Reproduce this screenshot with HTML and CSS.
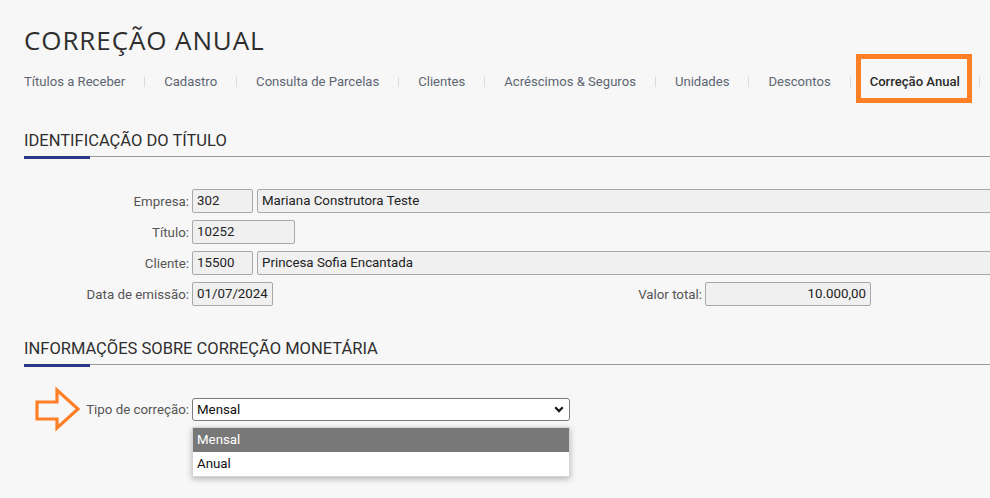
FILE: index.html
```html
<!DOCTYPE html>
<html lang="pt-BR">
<head>
<meta charset="utf-8">
<title>Correção Anual</title>
<link rel="stylesheet" href="styles.css">
</head>
<body>
<div class="page">
  <h1 class="page-title">CORREÇÃO ANUAL</h1>
  <nav class="tabs">
    <a class="tab">Títulos a Receber</a>
    <a class="tab">Cadastro</a>
    <a class="tab">Consulta de Parcelas</a>
    <a class="tab">Clientes</a>
    <a class="tab">Acréscimos &amp; Seguros</a>
    <a class="tab">Unidades</a>
    <a class="tab">Descontos</a>
    <a class="tab active">Correção Anual</a>
  </nav>

  <section class="section sec-id">
    <h2 class="section-title">IDENTIFICAÇÃO DO TÍTULO</h2>
    <div class="form">
      <div class="row">
        <span class="lbl">Empresa:</span>
        <div class="field w-code">302</div>
        <div class="field w-name">Mariana Construtora Teste</div>
      </div>
      <div class="row">
        <span class="lbl">Título:</span>
        <div class="field w-title">10252</div>
      </div>
      <div class="row">
        <span class="lbl">Cliente:</span>
        <div class="field w-code">15500</div>
        <div class="field w-name">Princesa Sofia Encantada</div>
      </div>
      <div class="row">
        <span class="lbl">Data de emissão:</span>
        <div class="field w-date">01/07/2024</div>
        <span class="lbl lbl-valor">Valor total:</span>
        <div class="field w-valor">10.000,00</div>
      </div>
    </div>
  </section>

  <section class="section sec-corr">
    <h2 class="section-title">INFORMAÇÕES SOBRE CORREÇÃO MONETÁRIA</h2>
    <div class="form">
      <div class="row row-select">
        <svg class="hint-arrow" width="48" height="48" viewBox="0 0 48 48" aria-hidden="true">
          <path d="M3 16 H23 V4 L44 23 L23 42 V33 H3 Z" fill="none" stroke="#ff7f27" stroke-width="3.2" stroke-linejoin="miter"/>
        </svg>
        <span class="lbl">Tipo de correção:</span>
        <div class="select-wrap">
          <div class="select">
            <span>Mensal</span>
            <svg class="chev" width="10" height="7" viewBox="0 0 10 7" aria-hidden="true">
              <path d="M1.2 1.3 L5 5.1 L8.8 1.3" fill="none" stroke="#1a1a1a" stroke-width="2.2"/>
            </svg>
          </div>
          <ul class="dropdown">
            <li class="opt selected">Mensal</li>
            <li class="opt">Anual</li>
          </ul>
        </div>
      </div>
    </div>
  </section>
</div>
</body>
</html>
```
FILE: styles.css
```css
html, body {
  margin: 0;
  padding: 0;
}

body {
  background: #f7f7f7;
  font-family: Roboto, "Liberation Sans", Arial, sans-serif;
  color: #333;
}

.page {
  box-sizing: border-box;
  width: 990px;
  height: 498px;
  overflow: hidden;
  padding: 25px 0 0 24px;
}

.page-title {
  margin: 0;
  font-family: "Open Sans", "Liberation Sans", sans-serif;
  font-weight: 400;
  font-size: 26px;
  line-height: 30px;
  letter-spacing: 0.9px;
  color: #2e2e2e;
  white-space: nowrap;
}

.tabs {
  display: flex;
  margin-top: 19px;
  font-size: 13.1px;
  line-height: 16px;
}

.tab {
  position: relative;
  display: flex;
  align-items: center;
  color: #5b6672;
  white-space: nowrap;
}

.tab::after {
  content: "";
  display: block;
  width: 1px;
  height: 10px;
  margin: 0 19px;
  background: #dcdcdc;
}

.tab.active {
  color: #2b2b2b;
  font-weight: 500;
}

.tab.active::before {
  content: "";
  position: absolute;
  left: -14px;
  top: -20px;
  width: 116px;
  height: 49px;
  box-sizing: border-box;
  border: 5px solid #ff7f27;
}

.section-title {
  position: relative;
  width: 1100px;
  margin: 0;
  padding-bottom: 6px;
  font-size: 16.5px;
  line-height: 19px;
  font-weight: 400;
  color: #2f2f2f;
  border-bottom: 1px solid #9b9b9b;
  white-space: nowrap;
}

.section-title::after {
  content: "";
  position: absolute;
  left: 0;
  bottom: -3px;
  width: 66px;
  height: 3px;
  background: #2c3786;
}

.sec-id {
  margin-top: 41px;
}

.sec-id .form {
  margin-top: 32px;
}

.sec-corr {
  margin-top: 33px;
}

.sec-corr .form {
  margin-top: 33px;
}

.form {
  display: flex;
  flex-direction: column;
  gap: 7px;
}

.row {
  display: flex;
  align-items: center;
  font-size: 13.3px;
}

.lbl {
  flex: none;
  width: 165px;
  margin-right: 3px;
  text-align: right;
  color: #555;
  white-space: nowrap;
}

.lbl-valor {
  width: 429px;
}

.field {
  flex: none;
  box-sizing: border-box;
  height: 24px;
  padding: 0 4px;
  line-height: 22px;
  border: 1px solid #a8a8a8;
  border-radius: 2px;
  background: #f0f0f0;
  color: #222;
  white-space: nowrap;
  overflow: hidden;
}

.field + .field {
  margin-left: 4px;
}

.w-code { width: 61px; }
.w-title { width: 103px; }
.w-date { width: 81px; }
.w-name { width: 790px; }
.w-valor {
  width: 166px;
  text-align: right;
}

.row-select {
  position: relative;
}

.hint-arrow {
  position: absolute;
  left: 10px;
  top: -12px;
}

.select-wrap {
  position: relative;
  flex: none;
  width: 378px;
}

.select {
  box-sizing: border-box;
  height: 23px;
  display: flex;
  align-items: center;
  justify-content: space-between;
  padding: 0 5px 0 4px;
  border: 1px solid #7a7a7a;
  border-radius: 3px;
  background: #fff;
  color: #111;
}

.chev {
  display: block;
}

.dropdown {
  position: absolute;
  left: 0;
  top: 29px;
  width: 378px;
  margin: 0;
  padding: 0;
  list-style: none;
  background: #fff;
  border: 1px solid #d4d4d4;
  box-sizing: border-box;
  box-shadow: 0 2px 6px rgba(0, 0, 0, 0.28);
}

.opt {
  height: 24px;
  line-height: 24px;
  padding-left: 4px;
  color: #111;
}

.opt.selected {
  background: #787878;
  color: #fff;
}
```
